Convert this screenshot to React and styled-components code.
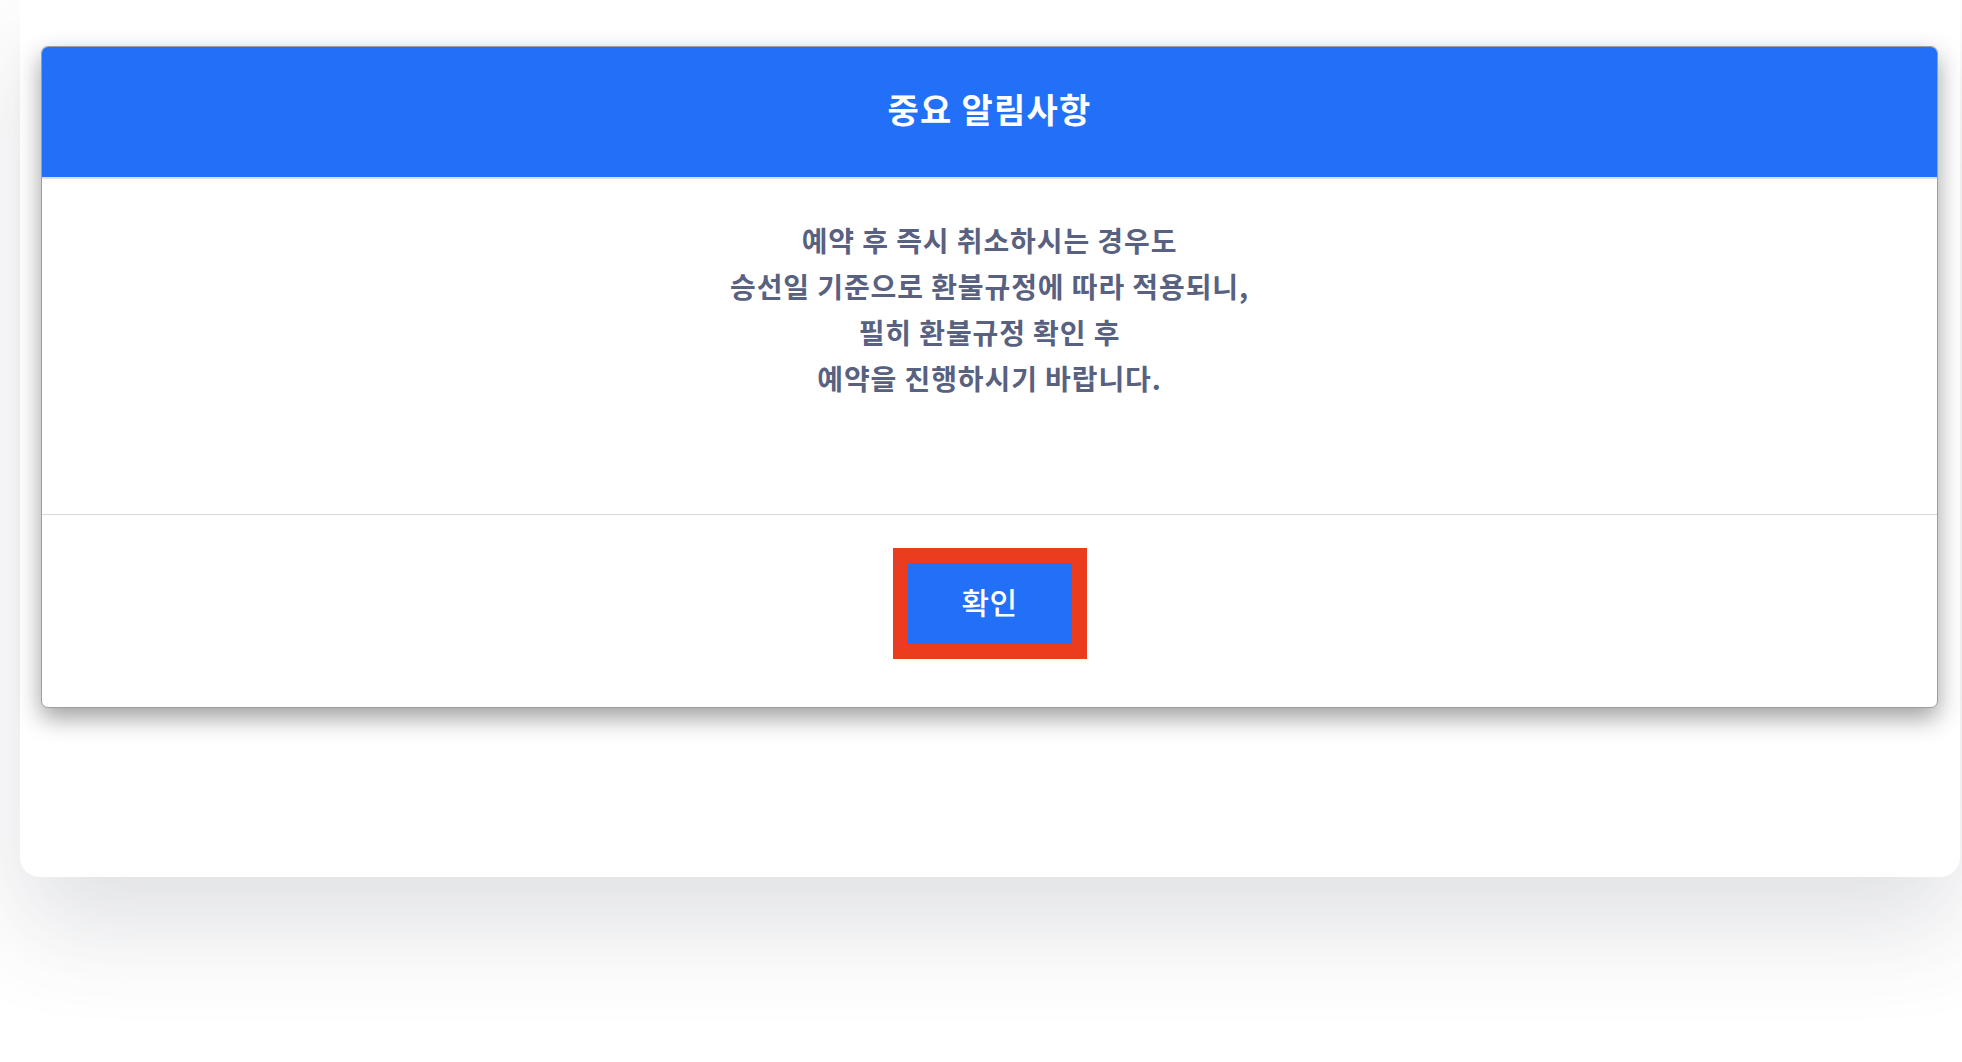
import React from 'react';
import styled, { createGlobalStyle } from 'styled-components';

const LINES = ['예약 후 즉시 취소하시는 경우도', '승선일 기준으로 환불규정에 따라 적용되니,', '필히 환불규정 확인 후', '예약을 진행하시기 바랍니다.'];

const GlobalStyle = createGlobalStyle`
  html, body {
    margin: 0;
    padding: 0;
    background: #fff;
    font-family: "Noto Sans CJK KR", "Noto Sans", sans-serif;
  }
`;

const Page = styled.div`
  width: 1962px;
  height: 1062px;
  overflow: hidden;
  padding: 0 2px 0 20px;
  box-sizing: border-box;
`;

const Card = styled.div`
  height: 877px;
  background: #fff;
  border-radius: 0 0 20px 20px;
  box-shadow: 0 50px 100px rgba(60, 70, 90, 0.16);
  padding: 46px 22px 0 21px;
  box-sizing: border-box;
`;

const Modal = styled.div`
  background: #fff;
  border: 1px solid #9e9e9e;
  border-radius: 7px;
  overflow: hidden;
  box-shadow: 0 10px 24px rgba(0, 0, 0, 0.38);
`;

const Header = styled.div`
  height: 132px;
  background: #2270f8;
  border-bottom: 2px solid #dedfe4;
  display: flex;
  align-items: center;
  justify-content: center;
  padding-bottom: 8px;
  box-sizing: border-box;
`;

const Title = styled.h2`
  margin: 0;
  font-size: 34px;
  font-weight: 700;
  color: #fff;
  letter-spacing: 1.2px;
`;

const Body = styled.div`
  padding: 38px 0 113px;
  border-bottom: 1px solid #d9d9dc;
  text-align: center;
`;

const Line = styled.p`
  margin: 0;
  font-size: 28px;
  line-height: 46px;
  font-weight: 700;
  color: #58617f;
  letter-spacing: 0.9px;
`;

const Footer = styled.div`
  display: flex;
  justify-content: center;
  padding: 33px 0 48px;
`;

const ConfirmBtn = styled.button`
  width: 194px;
  height: 111px;
  box-sizing: border-box;
  border: 15px solid #eb3c1d;
  background: #2270f8;
  color: #fff;
  font-family: inherit;
  font-size: 30px;
  font-weight: 500;
  letter-spacing: 0.5px;
  cursor: pointer;
  padding: 0 0 6px;
`;

const App = () => {
  return (
    <>
      <GlobalStyle />
      <Page>
        <Card>
          <Modal>
            <Header>
              <Title>중요 알림사항</Title>
            </Header>
            <Body>
              {LINES.map((line) => (
                <Line key={line}>{line}</Line>
              ))}
            </Body>
            <Footer>
              <ConfirmBtn type="button">확인</ConfirmBtn>
            </Footer>
          </Modal>
        </Card>
      </Page>
    </>
  );
};

export default App;
